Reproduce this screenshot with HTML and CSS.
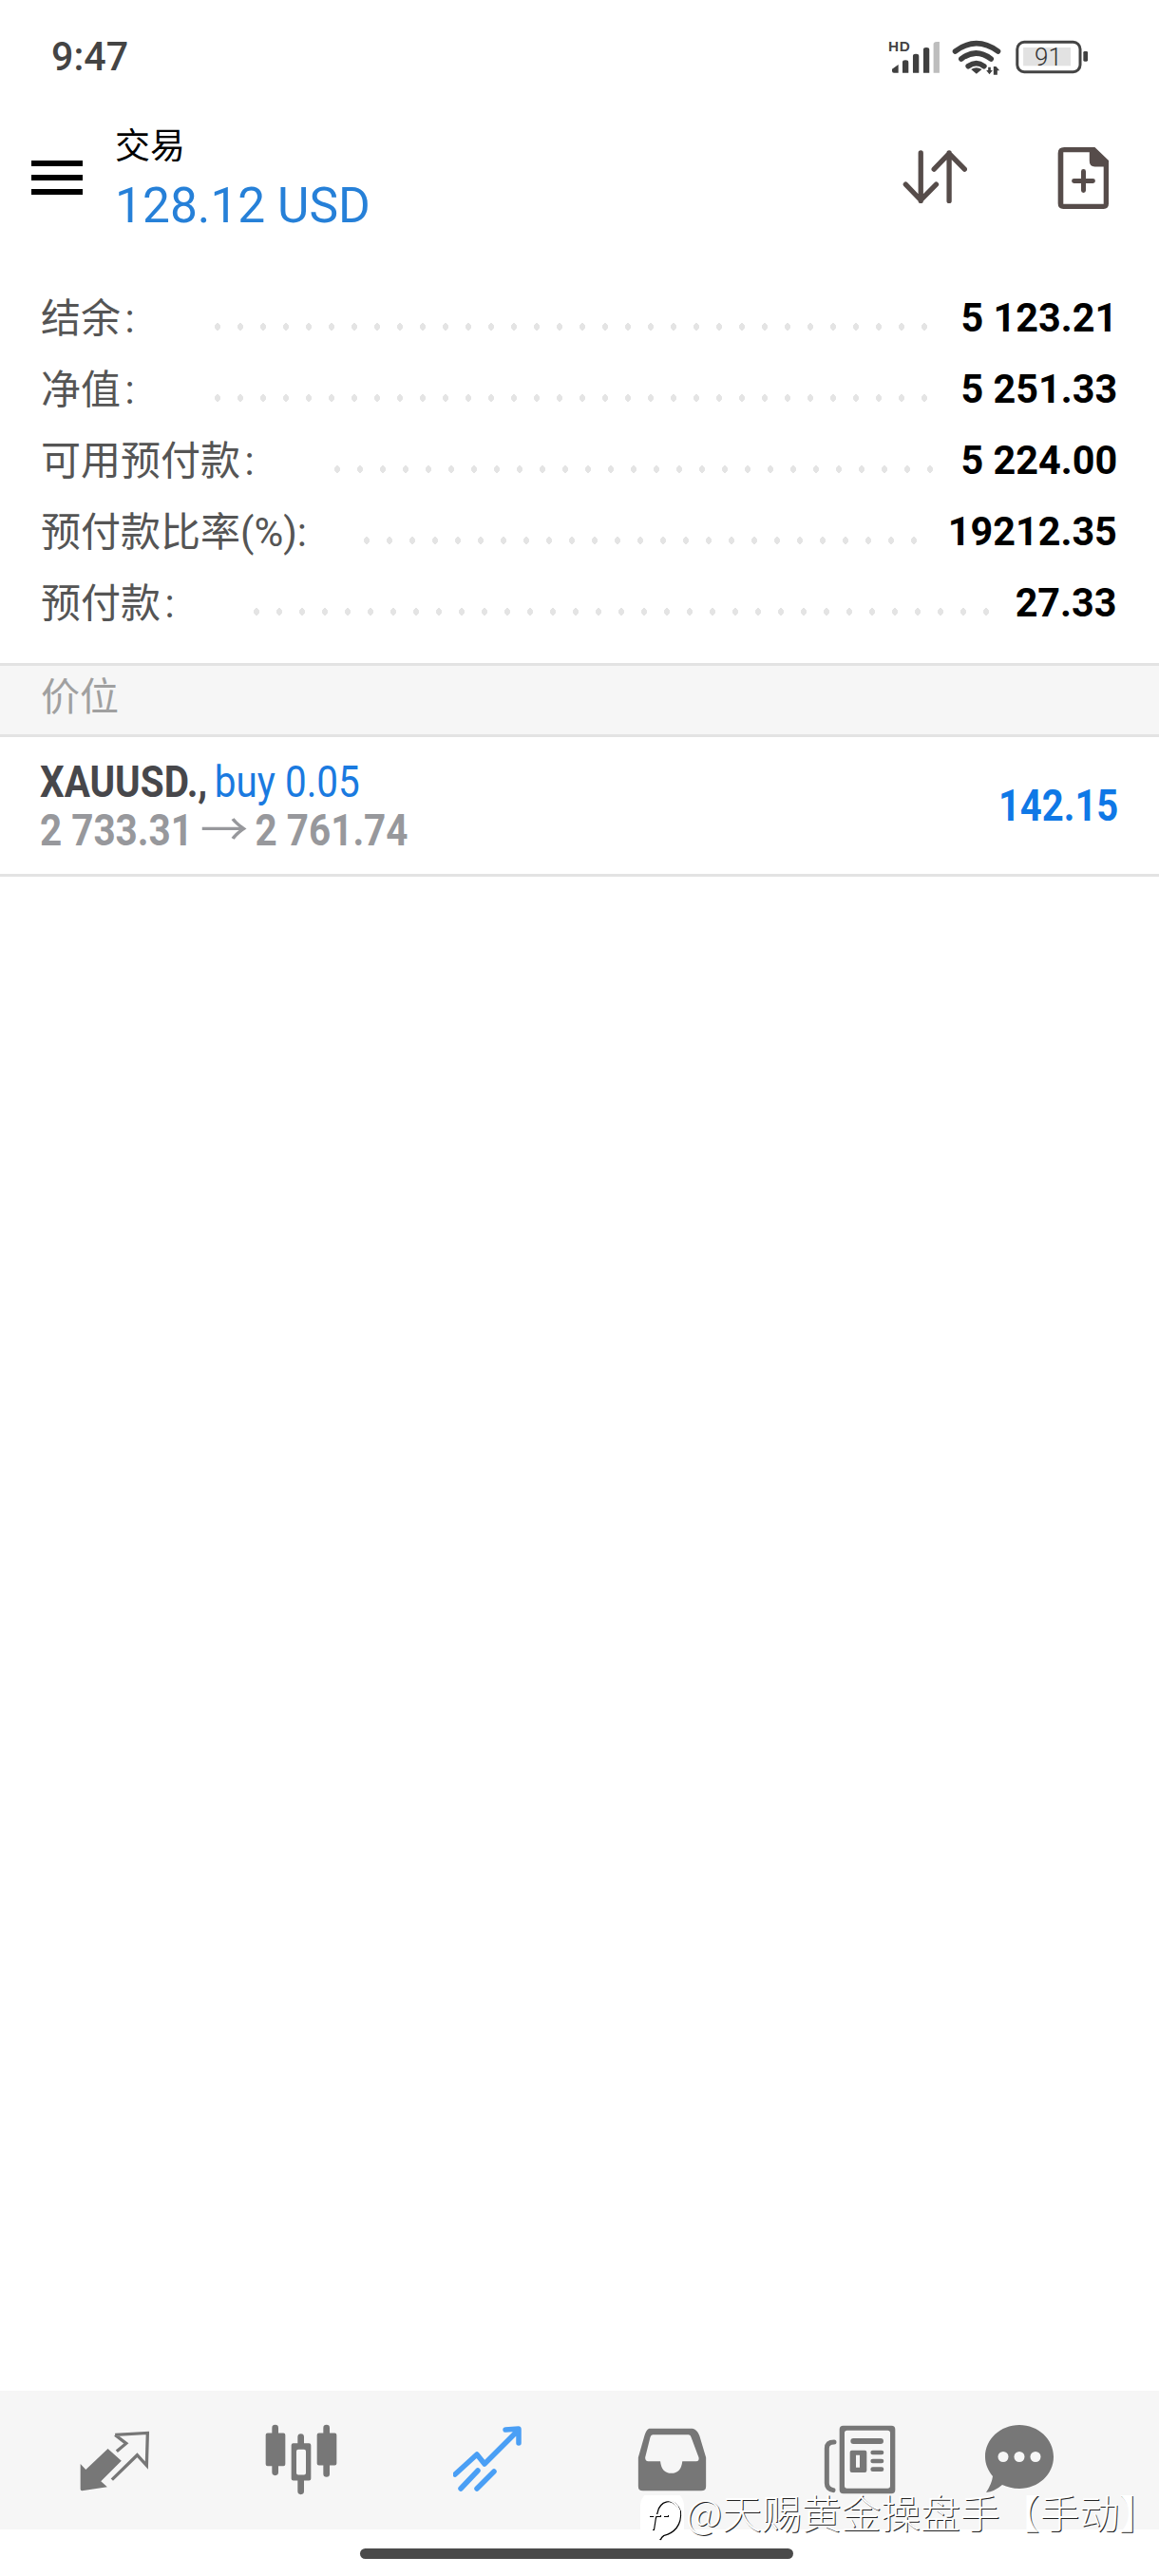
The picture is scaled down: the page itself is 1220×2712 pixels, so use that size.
FILE: index.html
```html
<!DOCTYPE html>
<html lang="zh-CN">
<head>
    <meta charset="UTF-8">
    <meta name="viewport" content="width=device-width, initial-scale=1.0">
    <title>交易</title>
    <link rel="stylesheet" href="styles.css">
</head>
<body>
    <div class="page">
        <div class="status">
            <span class="time">9:47</span>
            <svg class="status-icons" viewBox="30 30 640 120">
                <text class="hd" x="33" y="72">HD</text>
                <path class="fill-dark" d="M45 128l20-14v26H51q-6 0-6-6zM78 107q0-7 9-7h1q9 0 9 7v33H78zM111 87q0-7 9-7h1q9 0 9 7v53h-19zM144 67q0-7 9-7h1q9 0 9 7v73h-19z"/>
                <path class="fill-faint" d="M176 50q0-8 10-8h9v98h-19z"/>
                <g class="wifi">
                    <path d="M245 72q66-50 135 0"/>
                    <path d="M264 96q46-36 94 0"/>
                    <path d="M286 119q26-18 50 0"/>
                </g>
                <path class="fill-dark" d="M312 143l-17-14q17-10 34 0zM349 122h8v10h6l-10 13-10-13h6zM366 120h8l11 13h-7v13h-12z"/>
                <rect class="batt" x="441" y="43" width="199" height="94" rx="22"/>
                <rect class="batt-fill" x="460" y="60" width="150" height="58"/>
                <text class="batt-num" x="539" y="118">91</text>
                <rect class="fill-dark" x="650" y="72" width="14" height="32" rx="4"/>
            </svg>
        </div>

        <div class="topbar">
            <div class="burger"><span></span><span></span><span></span></div>
            <div class="title">
                <div class="title-name">交易</div>
                <div class="title-amount">128.12 USD</div>
            </div>
            <svg class="icon-sort" viewBox="215 480 205 170">
                <path d="M273 488V640M225 588L273 638L322 588M363 640V488M315 540L363 490L412 540"/>
            </svg>
            <svg class="icon-new" viewBox="700 460 172 208">
                <path class="doc" fill-rule="evenodd" d="M725 466H822L866 508V645Q866 662 850 662H722Q705 662 705 645V485Q705 466 725 466ZM722 482V646H850V528H822Q805 528 805 510V482Z"/>
                <path class="plus" d="M786 543V603M756 573H816"/>
            </svg>
        </div>

        <div class="summary">
            <div class="row"><span class="label">结余 :</span><span class="dots dots-a"></span><span class="value">5 123.21</span></div>
            <div class="row"><span class="label">净值 :</span><span class="dots dots-a"></span><span class="value">5 251.33</span></div>
            <div class="row"><span class="label">可用预付款 :</span><span class="dots dots-b"></span><span class="value">5 224.00</span></div>
            <div class="row"><span class="label">预付款比率(%):</span><span class="dots dots-c"></span><span class="value">19212.35</span></div>
            <div class="row"><span class="label">预付款 :</span><span class="dots dots-d"></span><span class="value">27.33</span></div>
        </div>

        <div class="section">价位</div>

        <div class="position">
            <div class="pos-info">
                <div class="pos-line"><b>XAUUSD.,</b> <span class="side">buy 0.05</span></div>
                <div class="pos-line pos-prices">2 733.31 <span class="arrow">→</span> 2 761.74</div>
            </div>
            <div class="profit">142.15</div>
        </div>

        <div class="spacer"></div>

        <div class="tabs">
            <svg class="tab tab-trade" viewBox="40 52 226 198">
                <path class="tab-fill" d="M45 160L62 178L132 112L175 150L110 215L130 233L50 245Q45 245 45 240Z"/>
                <path class="tab-line" d="M155 68L258 62L255 165L225 132L145 210M155 68L190 95L160 120"/>
            </svg>
            <svg class="tab tab-chart" viewBox="620 35 240 230">
                <path class="tab-fill" d="M648 50a10 10 0 0 1 20 0V66h16q6 0 6 6V164q0 6-6 6H668V190a10 10 0 0 1-20 0V170H634q-6 0-6-6V72q0-6 6-6h14zM810 50a10 10 0 0 1 20 0V66h16q6 0 6 6V162q0 6-6 6H830V195a10 10 0 0 1-20 0V168H796q-6 0-6-6V72q0-6 6-6h14z"/>
                <path class="tab-fill" fill-rule="evenodd" d="M729 78a10 10 0 0 1 20 0V98h16q6 0 6 6V210q0 6-6 6H749V250a10 10 0 0 1-20 0V216H715q-6 0-6-6V104q0-6 6-6h14zM731 118q-6 0-6 6V192q0 6 6 6h18q6 0 6-6V124q0-6-6-6z"/>
            </svg>
            <svg class="tab tab-active" viewBox="0 0 72 70">
                <path d="M2 52L25 31L33 41L68 6M55 5L69 4V19M8 67L26 48M25 67L43 49"/>
            </svg>
            <svg class="tab tab-inbox" viewBox="38 46 219 202">
                <path class="tab-fill" fill-rule="evenodd" d="M75 48H212Q226 50 234 70L255 140V232Q255 246 240 246H55Q40 246 40 232V140L60 70Q66 50 75 48ZM86 68Q80 68 78 76L62 140Q62 152 72 152H110Q114 190 145 190Q176 190 180 152H224Q234 152 232 140L208 76Q206 68 200 68Z"/>
            </svg>
            <svg class="tab tab-news" viewBox="622 38 228 219">
                <path class="tab-line-round" d="M655 92Q632 92 632 112V222Q632 240 652 244"/>
                <path class="tab-fill" fill-rule="evenodd" d="M684 40H836Q848 40 848 52V243Q848 255 836 255H684Q672 255 672 243V52Q672 40 684 40ZM696 55Q688 55 688 63V230Q688 238 696 238H824Q832 238 832 230V63Q832 55 824 55ZM716 80H802a9 9 0 0 1 0 18H716a9 9 0 0 1 0-18ZM711 118H752Q758 118 758 124V182Q758 188 752 188H711Q705 188 705 182V124Q705 118 711 118ZM724 133V172H736V133ZM777 118H805a7 7 0 0 1 0 14H777a7 7 0 0 1 0-14ZM777 145H805a7 7 0 0 1 0 14H777a7 7 0 0 1 0-14ZM777 171H805a7 7 0 0 1 0 14H777a7 7 0 0 1 0-14Z"/>
            </svg>
            <svg class="tab tab-chat" viewBox="0 0 72 72">
                <path class="tab-fill" d="M36 0C56 0 72 15 72 33.500C72 52 56 67 36 67C29 67 23 65 18 63Q10 70 1 71Q7 62 8 54C3 48 0 41 0 33.500C0 15 16 0 36 0Z"/>
                <circle class="tab-hole" cx="19" cy="33.500" r="5.500"/>
                <circle class="tab-hole" cx="36" cy="33.500" r="5.500"/>
                <circle class="tab-hole" cx="53" cy="33.500" r="5.500"/>
            </svg>
        </div>

        <div class="home-area"><div class="home-bar"></div></div>

        <div class="watermark">
            <svg class="wm-logo" viewBox="0 0 46 58">
                <path class="wm-shadow" d="M30 11Q38 12 42 22Q43 32 38 39Q33 45 25 47Q22 49 21 52M14 42Q15 30 19 19Q23 11 32 11M10 27H22M25 27H30"/>
                <path class="wm-stroke" d="M29 10Q37 11 41 21Q42 31 37 38Q32 44 24 46Q21 48 20 51M13 41Q14 29 18 18Q22 10 31 10M9 26H21M24 26H29"/>
            </svg>
            <span class="wm-text">@天赐黄金操盘手【手动】</span>
        </div>
    </div>
</body>
</html>
```

FILE: styles.css
```css
body {
    margin: 0;
    background-color: #fff;
    font-family: Roboto, "Noto Sans CJK SC", sans-serif;
}
.page {
    position: relative;
    width: 1220px;
    height: 2712px;
    display: flex;
    flex-direction: column;
    overflow: hidden;
}

/* status bar */
.status {
    height: 120px;
    flex: none;
    display: flex;
    align-items: flex-start;
    justify-content: space-between;
    box-sizing: border-box;
    padding: 35px 73px 0 54px;
}
.time {
    font-size: 42px;
    line-height: 50px;
    font-weight: 500;
    color: #444;
    display: inline-block;
    transform: scaleX(0.98);
    transform-origin: left;
}
.status-icons {
    width: 213px;
    height: 40px;
    margin-top: 5px;
}
.hd {
    font: bold 46px "Liberation Sans", sans-serif;
    letter-spacing: 2px;
    fill: #444;
}
.fill-dark { fill: #3f3f3f; }
.fill-faint { fill: #bdbdbd; }
.wifi path {
    fill: none;
    stroke: #3f3f3f;
    stroke-width: 17;
    stroke-linecap: round;
}
.batt {
    fill: none;
    stroke: #444;
    stroke-width: 9;
}
.batt-fill { fill: #e2e2e2; }
.batt-num {
    font: 300 78px Roboto, sans-serif;
    fill: #333;
    text-anchor: middle;
}

/* top bar */
.topbar {
    height: 130px;
    flex: none;
    display: flex;
    align-items: center;
    padding: 0 51px 0 33px;
}
.burger {
    width: 54px;
    display: flex;
    flex-direction: column;
    gap: 9px;
    margin-top: 3px;
}
.burger span {
    display: block;
    height: 6px;
    background-color: #000;
}
.title {
    margin-left: 34px;
    flex: 1;
}
.title-name {
    font-size: 37px;
    line-height: 50px;
    color: #000;
}
.title-amount {
    font-size: 51.500px;
    line-height: 60px;
    color: #2680d8;
    margin-top: 7px;
    margin-bottom: -7px;
}
.icon-sort {
    width: 68px;
    height: 57px;
    margin-right: 94px;
    margin-top: 3px;
}
.icon-sort path {
    fill: none;
    stroke: #564c4a;
    stroke-width: 16;
    stroke-linecap: round;
    stroke-linejoin: round;
}
.icon-new {
    width: 57px;
    height: 69px;
    margin-top: 5px;
}
.doc { fill: #564c4a; }
.plus {
    fill: none;
    stroke: #564c4a;
    stroke-width: 15;
    stroke-linecap: round;
}

/* account summary */
.summary {
    flex: none;
    padding: 47px 43px 26px 43px;
}
.row {
    height: 75px;
    display: flex;
    align-items: center;
}
.label {
    font-size: 42px;
    word-spacing: -6px;
    color: #555;
    white-space: nowrap;
    margin-top: -7px;
}
.dots {
    flex: none;
    height: 8px;
    margin-top: 18px;
    margin-right: auto;
    background-image: radial-gradient(ellipse 3px 4px at 3px 4px, #e4e4e4 90%, transparent 100%);
    background-size: 24px 8px;
    background-repeat: repeat-x;
}
.dots-a { width: 750px; margin-left: 84px; }
.dots-b { width: 630px; margin-left: 84px; }
.dots-c { width: 582px; margin-left: 60px; }
.dots-d { width: 774px; margin-left: 83px; }
.value {
    font-size: 42px;
    font-weight: 700;
    color: #000;
    white-space: nowrap;
    display: inline-block;
    transform: scaleX(0.985);
    transform-origin: right;
    margin-right: 1px;
}

/* positions */
.section {
    flex: none;
    height: 72px;
    border-top: 3px solid #e3e3e3;
    border-bottom: 3px solid #e3e3e3;
    background-color: #f6f6f6;
    background-clip: padding-box;
    padding-left: 43px;
    font-size: 41px;
    line-height: 66px;
    color: #a0a0a0;
}
.position {
    flex: none;
    height: 144px;
    border-bottom: 3px solid #e3e3e3;
    display: flex;
    align-items: center;
    justify-content: space-between;
    padding: 0 42px;
}
.pos-line {
    font-size: 47px;
    line-height: 51px;
    white-space: nowrap;
    color: #47474b;
    transform: scaleX(0.86);
    transform-origin: left;
}
.side {
    font-weight: 400;
    color: #1a7ae0;
    margin-left: -3px;
}
.pos-prices {
    font-weight: 700;
    color: #97989c;
}
.arrow {
    display: inline-block;
    font-weight: 400;
    transform: scaleX(1.25);
    margin: 0 3px;
}
.profit {
    font-size: 46px;
    font-weight: 700;
    color: #0f78e6;
    transform: scaleX(0.87);
    transform-origin: right;
    margin-right: 1px;
}
.spacer { flex: 1; }

/* bottom tabs */
.tabs {
    position: relative;
    flex: none;
    height: 146px;
    display: flex;
    align-items: flex-start;
    background-color: #f6f6f6;
}
.tab { flex: none; }
.tab-trade { width: 75px; height: 66px; margin: 41px 0 0 83px; }
.tab-chart { width: 80px; height: 77px; margin: 34px 0 0 119px; }
.tab-active { width: 72px; height: 70px; margin: 36px 0 0 120px; }
.tab-inbox { width: 73px; height: 67px; margin: 39px 0 0 122px; }
.tab-news { width: 76px; height: 73px; margin: 36px 0 0 123px; }
.tab-chat { width: 72px; height: 72px; margin: 36px 0 0 94px; }
.tab-fill { fill: #777; }
.tab-hole { fill: #f6f6f6; }
.tab-line {
    fill: none;
    stroke: #777;
    stroke-width: 10;
}
.tab-line-round {
    fill: none;
    stroke: #777;
    stroke-width: 15;
    stroke-linecap: round;
}
.tab-active path {
    fill: none;
    stroke: #4a9ff5;
    stroke-width: 5.500;
    stroke-linecap: round;
    stroke-linejoin: round;
}
.home-area {
    flex: none;
    height: 49px;
    box-sizing: border-box;
    padding: 20px 385px 0 379px;
}
.home-bar {
    height: 11px;
    border-radius: 6px;
    background-color: #4a4a4a;
}

/* watermark lies over the tab bar */
.watermark {
    position: absolute;
    left: 674px;
    top: 2622px;
    display: flex;
    align-items: flex-start;
}
.wm-logo {
    width: 46px;
    height: 58px;
    border-radius: 16px;
    background: linear-gradient(transparent 0, transparent 8%, #fff 8%, #fff 71%, transparent 71%);
    flex: none;
}
.wm-shadow, .wm-stroke {
    fill: none;
    stroke-width: 2;
}
.wm-shadow { stroke: #000; }
.wm-stroke { stroke: #fff; }
.wm-text {
    margin-left: 2px;
    font-family: "Noto Sans CJK SC", sans-serif;
    font-size: 41.800px;
    line-height: 44px;
    font-weight: 300;
    color: #fff;
    white-space: nowrap;
    text-shadow: 1px 1px 0 #222;
}
```
